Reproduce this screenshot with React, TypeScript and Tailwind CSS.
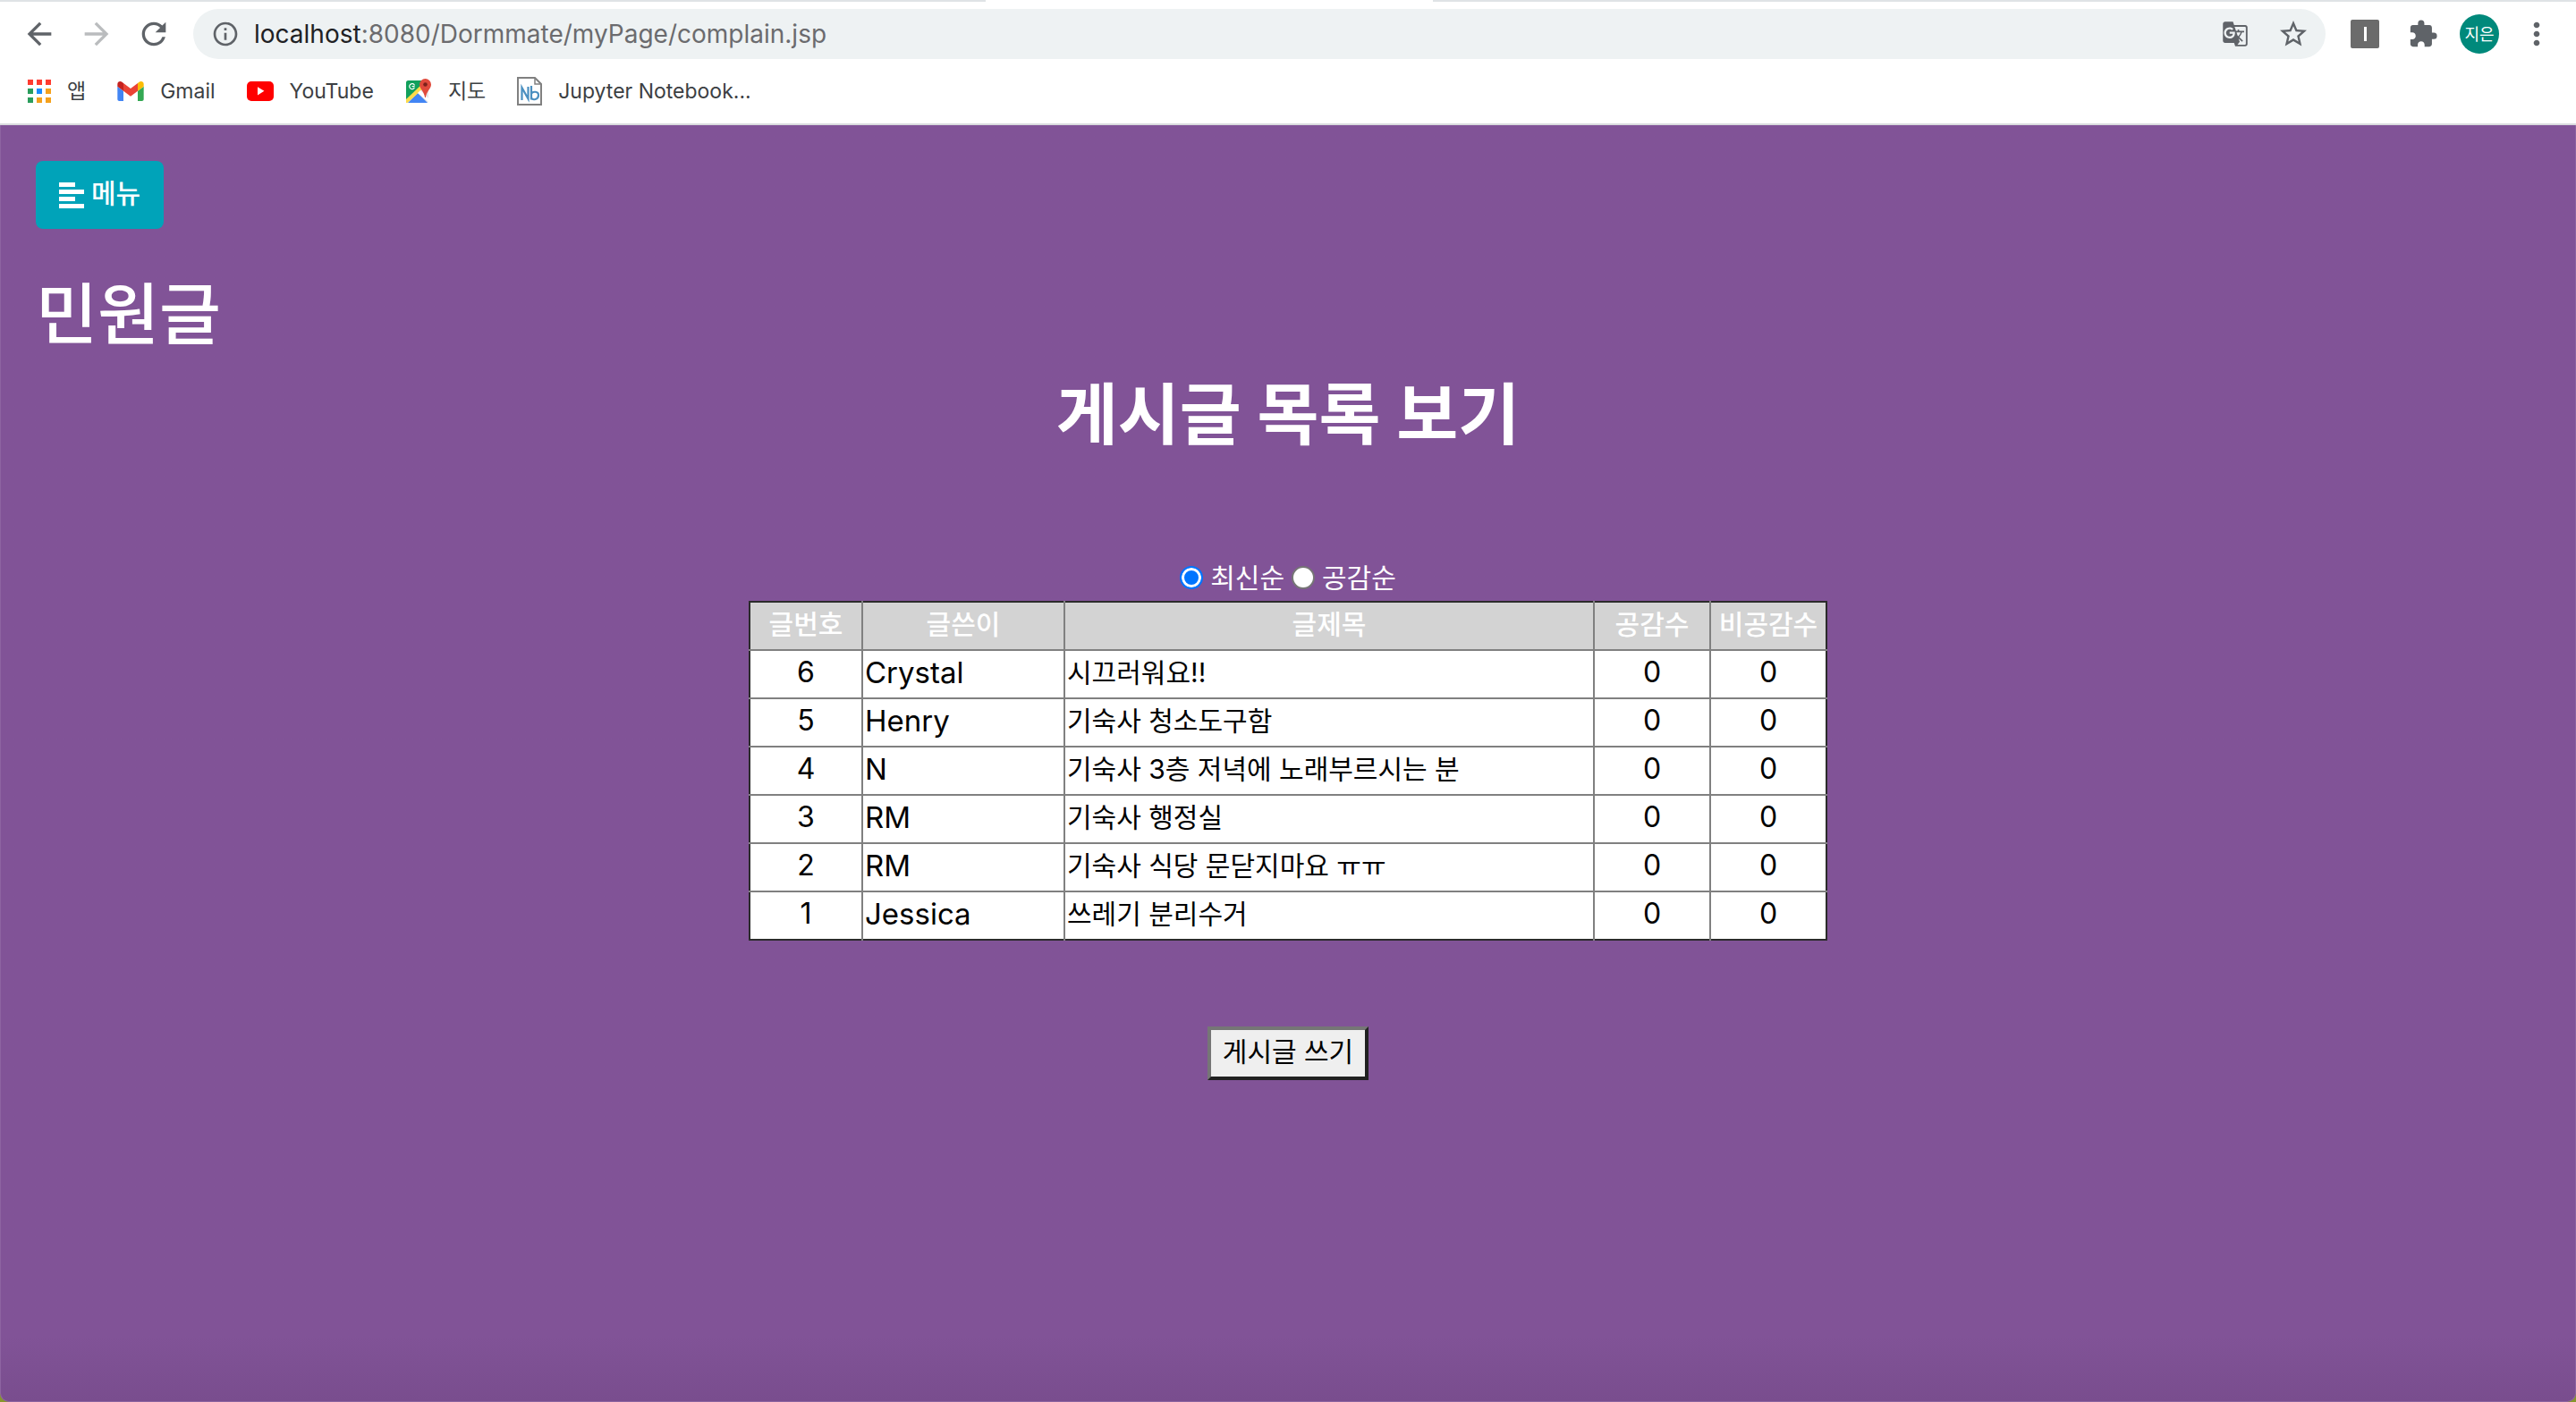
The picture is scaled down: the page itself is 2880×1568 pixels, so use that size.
import type { ReactNode } from "react";
import {
  MdArrowBack,
  MdArrowForward,
  MdExtension,
  MdGTranslate,
  MdInfoOutline,
  MdMoreVert,
  MdRefresh,
  MdStarBorder,
} from "react-icons/md";

type Post = { id: number; author: string; title: string };

const posts: Post[] = [
  { id: 6, author: "Crystal", title: "시끄러워요!!" },
  { id: 5, author: "Henry", title: "기숙사 청소도구함" },
  { id: 4, author: "N", title: "기숙사 3층 저녁에 노래부르시는 분" },
  { id: 3, author: "RM", title: "기숙사 행정실" },
  { id: 2, author: "RM", title: "기숙사 식당 문닫지마요 ㅠㅠ" },
  { id: 1, author: "Jessica", title: "쓰레기 분리수거" },
];

function AppsIcon() {
  const colors = ["#ff3b30", "#ff3b30", "#ff3b30", "#2a9d5c", "#1a8cff", "#f5a11c", "#2a9d5c", "#f5a11c", "#f5a11c"];
  return (
    <svg width="26" height="26" viewBox="0 0 26 26" aria-hidden="true">
      {colors.map((c, i) => (
        <rect key={i} x={(i % 3) * 10} y={Math.floor(i / 3) * 10} width="6" height="6" fill={c} />
      ))}
    </svg>
  );
}

function GmailIcon() {
  return (
    <svg width="30" height="22" viewBox="52 42 88 66" aria-hidden="true">
      <path fill="#4285f4" d="M58 108h14V74L52 59v43c0 3.3 2.7 6 6 6" />
      <path fill="#34a853" d="M120 108h14c3.3 0 6-2.7 6-6V59l-20 15" />
      <path fill="#fbbc04" d="M120 48v26l20-15v-8c0-7.4-8.5-11.6-14.4-7.2" />
      <path fill="#ea4335" d="M72 74V48l24 18 24-18v26L96 92" />
      <path fill="#c5221f" d="M52 51v8l20 15V48l-5.6-4.2C60.5 39.4 52 43.6 52 51" />
    </svg>
  );
}

function YouTubeIcon() {
  return (
    <svg width="30" height="22" viewBox="0 0 30 22" aria-hidden="true">
      <rect width="30" height="22" rx="5" fill="#f00" />
      <path d="M12 6.2v9.2l7.4-4.6z" fill="#fff" />
    </svg>
  );
}

function MapsIcon() {
  return (
    <svg width="30" height="30" viewBox="0 0 30 30" aria-hidden="true">
      <rect x="1" y="3" width="25" height="25" rx="2.5" fill="#e4e6e8" />
      <path d="M3.500 3H18v9L1 27V5.500A2.500 2.500 0 0 1 3.500 3z" fill="#12a05c" />
      <path d="M3 28 14 17l11 11z" fill="#4285f4" />
      <path d="M1 24 19 7v6L2.500 28H1z" fill="#fddb4a" />
      <path d="M14 17l3-3 9 9v4z" fill="#fff" />
      <path d="M10.500 8.400A3 3 0 1 0 10.400 11M7.600 9.600h3" fill="none" stroke="#fff" strokeWidth="1.200" />
      <path d="M22.500 1a6.500 6.500 0 0 1 6.500 6.500c0 5-5 7-6.100 14.500h-.8C21 14.500 16 12.500 16 7.500A6.500 6.500 0 0 1 22.500 1z" fill="#e04a3c" />
      <circle cx="22.500" cy="7.500" r="2.300" fill="#7c211b" />
    </svg>
  );
}

function NotebookIcon() {
  return (
    <svg width="28" height="32" viewBox="0 0 28 32" aria-hidden="true">
      <path d="M1 1h19l7 7v23H1z" fill="#fff" stroke="#808080" strokeWidth="2" />
      <path d="M20 1v7h7" fill="none" stroke="#808080" strokeWidth="1.500" />
      <path d="M5.500 26V12l7 12.500V11M16 10v15.500M16 19c1-3 8-3.500 8 1.500s-6.500 6-8 3" fill="none" stroke="#4a8fc0" strokeWidth="2.200" />
    </svg>
  );
}

function Bookmark({ icon, children }: { icon: ReactNode; children: ReactNode }) {
  return (
    <a href="#" className="flex items-center gap-[18px] whitespace-nowrap">
      {icon}
      <span>{children}</span>
    </a>
  );
}

function AlignLeftIcon() {
  return (
    <svg width="28" height="30" viewBox="0 0 28 30" fill="#fff" aria-hidden="true">
      <rect y="1" width="18" height="5" />
      <rect y="9" width="28" height="5" />
      <rect y="17" width="18" height="5" />
      <rect y="25" width="28" height="5" />
    </svg>
  );
}

function Browser() {
  return (
    <header className="border-b-2 border-[#d9dbde] bg-white">
      <div className="flex h-0.5 justify-center bg-[#dfe3e6]">
        <div className="mr-[176px] w-[500px] bg-white" />
      </div>
      <div className="flex h-[72px] items-center pr-6 pl-6 text-[#5f6368]">
        <button type="button" aria-label="뒤로" className="mr-6">
          <MdArrowBack size={40} />
        </button>
        <button type="button" aria-label="앞으로" className="mr-6 text-[#babcbe]">
          <MdArrowForward size={40} />
        </button>
        <button type="button" aria-label="새로고침" className="mr-6">
          <MdRefresh size={40} />
        </button>
        <div className="flex h-14 flex-1 items-center rounded-full bg-[#eef2f3] pr-[18px] pl-5">
          <MdInfoOutline size={32} />
          <p className="ml-4 flex-1 text-[28px] text-[#6b6b6e]">
            <span className="text-[#202124]">localhost</span>:8080/Dormmate/myPage/complain.jsp
          </p>
          <button type="button" aria-label="번역" className="mr-8">
            <MdGTranslate size={30} />
          </button>
          <button type="button" aria-label="북마크">
            <MdStarBorder size={36} />
          </button>
        </div>
        <button type="button" aria-label="확장 프로그램 I" className="mr-8 ml-7 flex size-8 items-center justify-center rounded-xs bg-[#6b6b6b]">
          <span className="h-4 w-[3px] bg-white" />
        </button>
        <button type="button" aria-label="확장 프로그램" className="mr-6">
          <MdExtension size={34} />
        </button>
        <button type="button" className="mr-[22px] size-11 rounded-full bg-[#00897b] text-[18px] text-white">
          지은
        </button>
        <button type="button" aria-label="메뉴 더보기">
          <MdMoreVert size={40} />
        </button>
      </div>
      <nav className="flex h-16 items-center gap-[35px] pb-2 pl-[31px] text-[23px] text-[#3c4043]">
        <Bookmark icon={<AppsIcon />}>앱</Bookmark>
        <Bookmark icon={<GmailIcon />}>Gmail</Bookmark>
        <Bookmark icon={<YouTubeIcon />}>YouTube</Bookmark>
        <Bookmark icon={<MapsIcon />}>지도</Bookmark>
        <Bookmark icon={<NotebookIcon />}>Jupyter Notebook...</Bookmark>
      </nav>
    </header>
  );
}

function SortOption({ label, checked }: { label: string; checked?: boolean }) {
  return (
    <label className="flex items-center gap-2">
      <input
        type="radio"
        name="sort"
        defaultChecked={checked}
        className="size-[26px] appearance-none rounded-full border-2 border-[#767676] bg-white checked:border-[#0075ff] checked:bg-[#0075ff] checked:shadow-[inset_0_0_0_3px_white]"
      />
      {label}
    </label>
  );
}

function PostTable() {
  const cell = "border-l-2 border-t-2 border-[#808080] first:border-l-0";
  return (
    <table className="w-[1206px] table-fixed border-collapse border-2 border-[#2b2b2b] bg-white text-black">
      <colgroup>
        <col className="w-[126px]" />
        <col className="w-[226px]" />
        <col />
        <col className="w-[130px]" />
        <col className="w-[130px]" />
      </colgroup>
      <thead>
        <tr className="h-[54px] bg-[#d3d3d3] leading-12 text-white">
          {["글번호", "글쓴이", "글제목", "공감수", "비공감수"].map((h) => (
            <th key={h} scope="col" className="border-l-2 border-[#808080] p-0 pb-1 font-medium whitespace-nowrap first:border-l-0">
              {h}
            </th>
          ))}
        </tr>
      </thead>
      <tbody>
        {posts.map((p) => (
          <tr key={p.id} className="h-[54px] leading-12">
            <td className={`${cell} pb-1 text-center text-[32px]`}>{p.id}</td>
            <td className={`${cell} pb-1 pl-0.5 text-[33px]`}>{p.author}</td>
            <td className={`${cell} pb-1 pl-0.5`}>
              <a href="#">{p.title}</a>
            </td>
            <td className={`${cell} pb-1 text-center text-[32px]`}>0</td>
            <td className={`${cell} pb-1 text-center text-[32px]`}>0</td>
          </tr>
        ))}
      </tbody>
    </table>
  );
}

export default function App() {
  return (
    <div className="flex min-h-screen flex-col bg-[#87962c] font-['Inter','Noto_Sans_CJK_KR',sans-serif]">
      <Browser />
      <main className="flex flex-1 flex-col rounded-b-[10px] border-x border-b border-[#8d64a1] bg-[#815397] bg-linear-to-t from-[#794d8e] to-[#815397] to-[72px] px-[39px] pt-10 text-[30px] text-white">
        <button type="button" className="flex h-[76px] items-center gap-2 self-start rounded-lg bg-[#00a3b9] px-[26px] font-medium">
          <AlignLeftIcon />
          <span className="pb-1">메뉴</span>
        </button>
        <h2 className="mt-12 text-[75px] leading-[96px] font-medium">민원글</h2>
        <div className="flex flex-col items-center">
          <h1 className="mt-4 text-[75px] leading-[96px] font-bold">게시글 목록 보기</h1>
          <div className="mt-[110px] mb-0.5 flex h-12 items-center gap-2">
            <SortOption label="최신순" checked />
            <SortOption label="공감순" />
          </div>
          <PostTable />
          <button
            type="button"
            className="mt-24 h-[60px] border-4 border-t-[#767676] border-r-[#212121] border-b-[#212121] border-l-[#767676] bg-[#efefef] px-[13px] pb-1 leading-12 text-black"
          >
            게시글 쓰기
          </button>
        </div>
      </main>
    </div>
  );
}
